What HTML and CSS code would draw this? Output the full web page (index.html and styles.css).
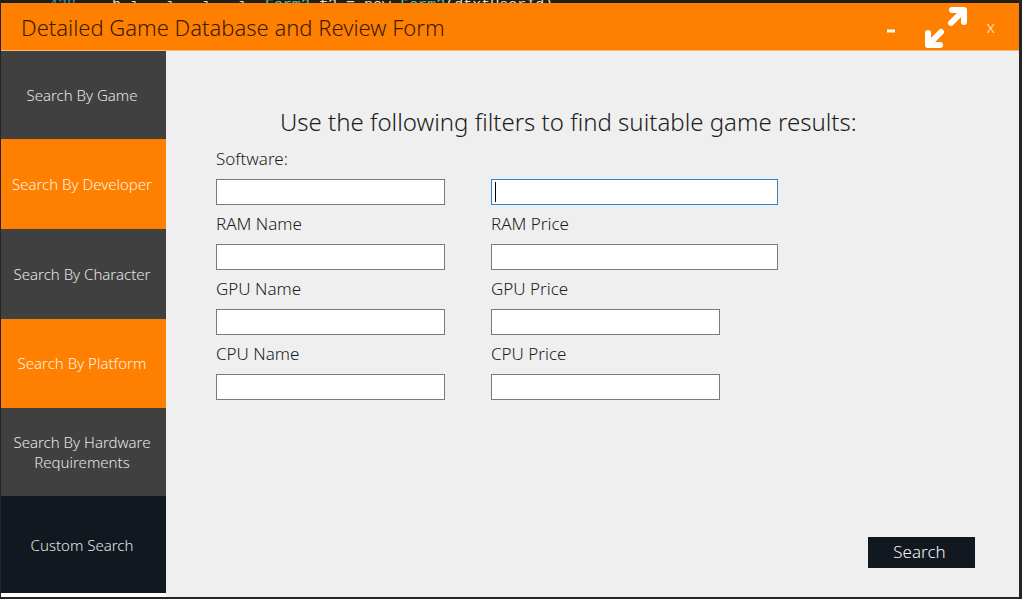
FILE: index.html
```html
<!DOCTYPE html>
<html lang="en">
<head>
<meta charset="utf-8">
<title>Detailed Game Database and Review Form</title>
<link rel="stylesheet" href="styles.css">
</head>
<body>
<div class="editor-strip" aria-hidden="true"><span class="line-number">438</span>    <span class="code">b i   i   i   i</span>  <span class="type">Form2</span> <span class="code">f2 = new</span> <span class="type">Form2</span><span class="code">(dtxtUserId)</span></div>
<div class="window">
  <header class="titlebar">
    <h1 class="title">Detailed Game Database and Review Form</h1>
    <div class="window-controls">
      <button class="control minimize" type="button" aria-label="Minimize"><svg width="10" height="4" viewBox="0 0 10 4"><path d="M1 2h8" stroke="#fff" stroke-width="3"/></svg></button>
      <button class="control" type="button" aria-label="Maximize">
        <svg width="44" height="44" viewBox="0 0 44 44" fill="none" stroke="#fff" stroke-width="6" stroke-linecap="round" stroke-linejoin="round">
          <path d="M28 5h12v12M39 6L27 18"/>
          <path d="M4 28v12h12M5 39L17 27"/>
        </svg>
      </button>
      <button class="control close" type="button" aria-label="Close">x</button>
    </div>
  </header>
  <div class="body">
    <nav class="sidebar">
      <button class="tab short" type="button">Search By Game</button>
      <button class="tab orange" type="button">Search By Developer</button>
      <button class="tab" type="button">Search By Character</button>
      <button class="tab orange" type="button">Search By Platform</button>
      <button class="tab short" type="button">Search By Hardware Requirements</button>
      <button class="tab navy" type="button">Custom Search</button>
    </nav>
    <main class="main">
      <h2 class="heading">Use the following filters to find suitable game results:</h2>
      <form class="filters">
        <div class="field"><label for="software">Software:</label><input id="software" type="text"></div>
        <div class="field wide">
          <div class="focus-box"><input class="focused" type="text" aria-label="Software details"><span class="caret"></span></div>
        </div>
        <div class="field"><label for="ram-name">RAM Name</label><input id="ram-name" type="text"></div>
        <div class="field wide"><label for="ram-price">RAM Price</label><input id="ram-price" type="text"></div>
        <div class="field"><label for="gpu-name">GPU Name</label><input id="gpu-name" type="text"></div>
        <div class="field"><label for="gpu-price">GPU Price</label><input id="gpu-price" type="text"></div>
        <div class="field"><label for="cpu-name">CPU Name</label><input id="cpu-name" type="text"></div>
        <div class="field"><label for="cpu-price">CPU Price</label><input id="cpu-price" type="text"></div>
      </form>
      <button class="search" type="button">Search</button>
    </main>
  </div>
</div>
</body>
</html>
```
FILE: styles.css
```css
* {
  box-sizing: border-box;
}

body {
  margin: 0;
  min-height: 100vh;
  display: flex;
  flex-direction: column;
  padding: 0 3px 2px 1px;
  background: #242426;
  color: #1c1c1c;
  font-family: "Century Gothic", "Noto Sans", sans-serif;
  font-weight: 300;
}

button,
input {
  font: inherit;
  border: 0;
  border-radius: 0;
}

.editor-strip {
  height: 3px;
  padding-left: 48px;
  overflow: hidden;
  white-space: pre;
  background: #1e1e1e;
  font: 15px/12px "Liberation Mono", monospace;
}

.line-number { color: #2b91af; }
.code { color: #dcdcdc; }
.type { color: #4ec9b0; }

.window {
  flex: 1;
  display: flex;
  flex-direction: column;
  background: #efefef;
}

.titlebar {
  height: 48px;
  display: flex;
  align-items: center;
  justify-content: space-between;
  padding: 0 20px;
  background: #ff8000;
  border-bottom: 1px solid #f8b878;
}

.title {
  margin: 0;
  font-size: 22px;
  font-weight: 300;
  line-height: 28px;
  color: #3a1c00;
}

.window-controls {
  display: flex;
  align-items: center;
}

.control {
  display: flex;
  padding: 0;
  background: none;
  color: #ffe8d0;
}

.minimize {
  padding: 8px 4px 0;
  margin-right: 24px;
}

.close {
  margin-left: 14px;
  padding: 0 4px;
  font-size: 17px;
  line-height: 20px;
}

.body {
  flex: 1;
  display: flex;
}

.sidebar {
  width: 165px;
  display: flex;
  flex-direction: column;
  padding-bottom: 4px;
  background: #fff;
}

.tab {
  flex: 90 1 0;
  padding: 0 8px 0 5px;
  background: #404040;
  color: #e6e6e6;
  font-size: 15px;
  font-weight: 300;
  line-height: 20px;
}

.tab.short {
  flex-grow: 88;
}

.tab.orange {
  background: #ff8000;
  color: #fff0e0;
}

.tab.navy {
  flex-grow: 97;
  background: #12181f;
}

.main {
  flex: 1;
  display: flex;
  flex-direction: column;
  padding: 55px 44px 29px 50px;
}

.heading {
  margin: 0 0 9px;
  padding-left: 64px;
  font-size: 24px;
  font-weight: 300;
  line-height: 32px;
}

.filters {
  display: grid;
  grid-template-columns: 229px 287px;
  column-gap: 46px;
  row-gap: 7px;
}

.field {
  display: flex;
  flex-direction: column;
  justify-content: flex-end;
  align-items: flex-start;
  gap: 8px;
}

.field label {
  font-size: 17px;
  line-height: 24px;
}

.field input {
  display: block;
  width: 229px;
  height: 26px;
  padding: 0 4px;
  border: 1px solid #7a7a7a;
  background: #fff;
  outline: none;
}

.field.wide input {
  width: 287px;
}

.field .focused {
  border-color: #2f86cc;
}

.focus-box {
  position: relative;
}

.caret {
  position: absolute;
  left: 4px;
  top: 3px;
  width: 1px;
  height: 20px;
  background: #000;
}

.search {
  width: 107px;
  margin-top: auto;
  align-self: flex-end;
  padding: 3px 4px 4px 0;
  background: #12181f;
  color: #f4f4f4;
  font-size: 17px;
  line-height: 24px;
}
```
